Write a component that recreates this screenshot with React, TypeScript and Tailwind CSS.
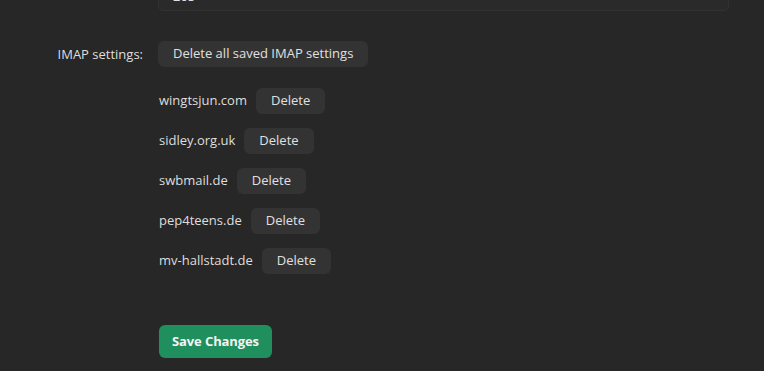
import React from "react";

const domains = ["wingtsjun.com", "sidley.org.uk", "swbmail.de", "pep4teens.de", "mv-hallstadt.de"];

export default function App() {
  return (
    <div
      className="w-[764px] h-[371px] overflow-hidden bg-[#272727] text-[#dedede] text-[13px]"
      style={{ fontFamily: '"Open Sans", "Noto Sans", sans-serif' }}
    >
      <div className="flex">
        <div className="w-[158px] shrink-0" />
        <div className="w-[571px] h-[34px] -mt-[23px] rounded-[5px] bg-[#2a2a2a] border border-[#323232] px-[14px] pt-[5px] flex items-center text-[#e0e0e0]">
          205
        </div>
      </div>
      <div className="flex mt-[30px]">
        <div className="w-[158px] shrink-0 pr-[15px] text-right leading-[26px]">IMAP settings:</div>
        <div className="flex flex-col">
          <div>
            <button className="h-[26px] px-[15px] rounded-[6px] bg-[#333333] text-[#e0e0e0]">
              Delete all saved IMAP settings
            </button>
          </div>
          <div className="flex flex-col gap-[14px] mt-[21px] pl-[1px]">
            {domains.map((d) => (
              <div key={d} className="flex items-center gap-[9px]">
                <span>{d}</span>
                <button className="h-[26px] px-[15px] rounded-[6px] bg-[#333333] text-[#e0e0e0]">Delete</button>
              </div>
            ))}
          </div>
          <div className="mt-[51px] pl-[1px]">
            <button className="h-[33px] px-[13px] rounded-[6px] bg-[#1f8f5e] text-[#f4f4f4] font-bold tracking-[-0.1px]">
              Save Changes
            </button>
          </div>
        </div>
      </div>
    </div>
  );
}
